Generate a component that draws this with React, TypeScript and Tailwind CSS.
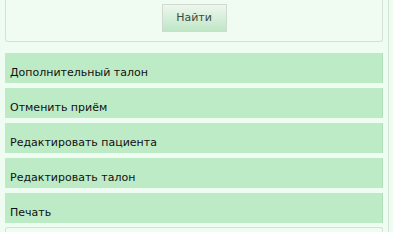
export default function App() {
  const actions = [
    'Дополнительный талон',
    'Отменить приём',
    'Редактировать пациента',
    'Редактировать талон',
    'Печать',
  ]

  return (
    <div className="w-[393px] h-[232px] overflow-hidden bg-[#effcf1] font-['DejaVu_Sans',sans-serif]">
      <div className="w-[389px] h-full border-r border-[#d4e4d6] px-[5px]">
        {/* search panel, top edge is off-screen */}
        <div className="h-[42px] border-x border-b border-[#d3e2d5] rounded-b-[3px] bg-[#f0fcf2] flex justify-center pt-[4px]">
          <button className="w-[65px] h-[28px] border border-[#cfd9d0] bg-gradient-to-b from-[#edf7ee] to-[#bfe6c6] text-[11px] text-[#3c4a3d]">
            Найти
          </button>
        </div>

        <div className="mt-[11px] flex flex-col gap-[5px]">
          {actions.map(a => (
            <div
              key={a}
              className="h-[30px] bg-[#bcebc5] border-r border-[#b2dfbb] pl-[5px] pt-[13px] text-[11px] leading-[14px] text-[#111]"
            >
              {a}
            </div>
          ))}
        </div>

        <div className="mt-[4px] h-[20px] border-x border-t border-[#d3e2d5] rounded-t-[3px]" />
      </div>
    </div>
  )
}
